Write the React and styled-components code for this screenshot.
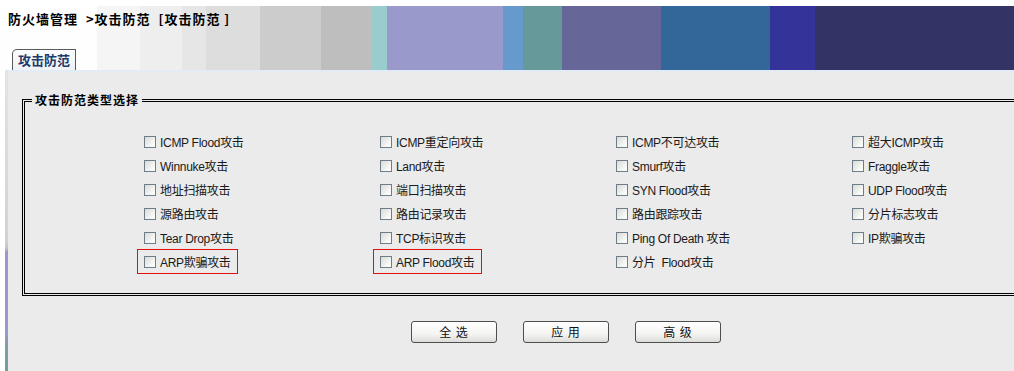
import styled, {createGlobalStyle} from 'styled-components'

const GlobalStyle = createGlobalStyle`
  html, body {
    margin: 0;
    padding: 0;
    background: #fff;
    overflow: hidden;
  }
  body {
    font-family: "Liberation Sans", "Noto Sans CJK SC", sans-serif;
    color: #111;
  }
`

const STRIPES = `linear-gradient(to right,
  #fefefe 0 97px, #f5f5f5 97px 140px, #eeeeee 140px 182px, #e6e6e6 182px 206px,
  #dddddd 206px 260px, #cccccc 260px 321px, #bebebe 321px 372px,
  #99cccc 372px 387px, #9999cc 387px 503px, #6699cc 503px 523px,
  #669999 523px 562px, #666699 562px 661px, #336699 661px 770px,
  #333399 770px 815px, #333366 815px)`

const Page = styled.div`
  padding-top: 6px;
`

const Header = styled.header`
  height: 64px;
  display: flex;
  flex-direction: column;
  justify-content: space-between;
  background: ${STRIPES};
`

const Title = styled.h1`
  margin: 0;
  padding: 5px 0 0 8px;
  font: bold 13px/16px "Noto Sans CJK SC", sans-serif;
  letter-spacing: 1px;
  color: #000;
  white-space: pre;
`

const Tabs = styled.nav`
  display: flex;
  padding-left: 12px;
`

const Tab = styled.div`
  height: 20px;
  padding: 0 5px;
  border: 1px solid #5a5a5a;
  border-bottom: 0;
  border-top-left-radius: 5px;
  background: linear-gradient(#fbfcfd, #eef1f5);
  font: bold 13px/20px "Noto Sans CJK SC", sans-serif;
  color: #1d3a6b;
`

const Content = styled.div`
  display: flex;
  height: 301px;
`

const SideStrip = styled.div`
  flex: none;
  width: 3px;
  margin-left: 5px;
  background: linear-gradient(#e4e4e4 0, #d2d2d2 170px, #c4c4c4 178px,
    #9999cc 182px, #9999cc 262px, #7f9fa6 275px, #6f9f9a 301px);
`

const Panel = styled.main`
  flex: 1;
  min-width: 0;
  overflow: hidden;
  box-sizing: border-box;
  padding: 20px 0 0 14px;
  background: #ebebeb;
  border-top: 2px solid #e3ebf5;
`

/* the group runs on past the right edge of the frame, so it shows no right side */
const Group = styled.fieldset`
  min-width: 0;
  margin: 0 -40px 0 0;
  padding: 21px 0 20px 7px;
  border: 3px double #000;
`

const Legend = styled.legend`
  padding: 0 3px;
  font: bold 12px/16px "Noto Sans CJK SC", sans-serif;
  letter-spacing: 1px;
  color: #000;
`

const OptionGrid = styled.div`
  display: grid;
  grid-template-columns: repeat(3, 236px) auto;
  grid-auto-rows: 24px;
  padding-left: 105px;
`

const Option = styled.label`
  justify-self: start;
  display: inline-flex;
  align-items: center;
  gap: 4px;
  box-sizing: border-box;
  height: 25px;
  padding: 0 6px;
  border: 1px solid ${p => (p.$marked ? '#e01010' : 'transparent')};
  font-size: 12px;
  letter-spacing: -0.3px;
  color: #1a1a1a;
  white-space: pre;
`

const Box = styled.input.attrs({type: 'checkbox'})`
  appearance: none;
  margin: 0;
  width: 12px;
  height: 12px;
  box-sizing: border-box;
  border: 1px solid #6f7c89;
  background: linear-gradient(135deg, #d9dbd6, #fbfbfa 80%);
`

const ButtonBar = styled.div`
  display: flex;
  gap: 26px;
  margin-top: 25px;
  padding-left: 389px;
`

const Button = styled.button`
  width: 86px;
  height: 22px;
  padding: 0;
  border: 1px solid #4d4d4d;
  border-radius: 3px;
  background: linear-gradient(#ffffff, #f4f4f2 60%, #dcdcd8);
  font: 12px/20px "Noto Sans CJK SC", sans-serif;
  letter-spacing: 1px;
  color: #111;
  white-space: pre;
`

const attacks = [
  'ICMP Flood攻击', 'ICMP重定向攻击', 'ICMP不可达攻击', '超大ICMP攻击',
  'Winnuke攻击', 'Land攻击', 'Smurf攻击', 'Fraggle攻击',
  '地址扫描攻击', '端口扫描攻击', 'SYN Flood攻击', 'UDP Flood攻击',
  '源路由攻击', '路由记录攻击', '路由跟踪攻击', '分片标志攻击',
  'Tear Drop攻击', 'TCP标识攻击', 'Ping Of Death 攻击', 'IP欺骗攻击',
  'ARP欺骗攻击', 'ARP Flood攻击', '分片  Flood攻击',
]

const marked = ['ARP欺骗攻击', 'ARP Flood攻击']

const App = () => (
  <Page>
    <GlobalStyle />
    <Header>
      <Title>{'防火墙管理  >攻击防范  [攻击防范 ]'}</Title>
      <Tabs>
        <Tab>攻击防范</Tab>
      </Tabs>
    </Header>
    <Content>
      <SideStrip />
      <Panel>
        <Group>
          <Legend>攻击防范类型选择</Legend>
          <OptionGrid>
            {attacks.map(name => (
              <Option key={name} $marked={marked.includes(name)}>
                <Box />
                {name}
              </Option>
            ))}
          </OptionGrid>
        </Group>
        <ButtonBar>
          <Button>全 选</Button>
          <Button>应 用</Button>
          <Button>高 级</Button>
        </ButtonBar>
      </Panel>
    </Content>
  </Page>
)

export default App
